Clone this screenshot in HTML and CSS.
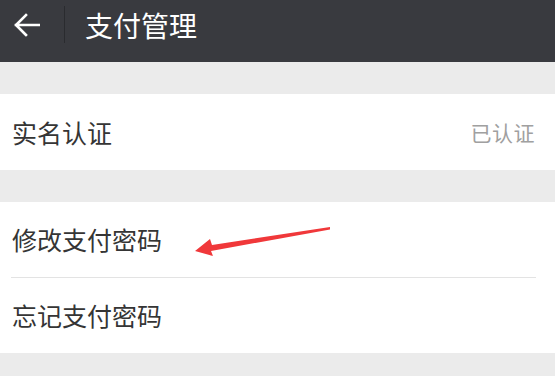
FILE: index.html
```html
<!DOCTYPE html>
<html lang="zh">
<head>
<meta charset="utf-8">
<link rel="stylesheet" href="styles.css">
</head>
<body>
<div class="page">
  <header class="topbar">
    <div class="back">
      <svg width="26" height="24" viewBox="0 0 26 24"><path d="M12 2 L2 12 L12 22 M2 12 H25" fill="none" stroke="#fff" stroke-width="2.6" stroke-linecap="square"/></svg>
    </div>
    <div class="vline"></div>
    <div class="title">支付管理</div>
  </header>
  <section class="group g1">
    <div class="row"><span class="label">实名认证</span><span class="value">已认证</span></div>
  </section>
  <section class="group g2">
    <div class="row"><span class="label">修改支付密码</span></div>
    <div class="sep"></div>
    <div class="row"><span class="label">忘记支付密码</span></div>
  </section>
  <svg class="pointer" width="555" height="376" viewBox="0 0 555 376">
    <polygon points="330,227 330,229.5 211,251 213,256 195,251 210,239 212,245" fill="#f0383a"/>
  </svg>
</div>
</body>
</html>
```

FILE: styles.css
```css
html, body {
  margin: 0;
  padding: 0;
  background: #ebebeb;
}
.page {
  position: relative;
  width: 555px;
  height: 376px;
  overflow: hidden;
  font-family: "Noto Sans CJK SC", "Noto Sans", sans-serif;
}
.topbar {
  height: 62px;
  background: #393a3f;
  display: flex;
  align-items: center;
}
.back {
  width: 64px;
  display: flex;
  justify-content: center;
  padding-right: 10px;
  box-sizing: border-box;
  margin-top: -12px;
}
.back svg { display: block; }
.vline {
  width: 1px;
  height: 37px;
  background: #2a2b2f;
  align-self: flex-start;
  margin-top: 6px;
}
.title {
  color: #fff;
  font-size: 28px;
  margin-left: 20px;
  margin-top: -13px;
}
.group {
  background: #fff;
}
.g1 { margin-top: 32px; }
.g2 { margin-top: 32px; }
.row {
  height: 75px;
  display: flex;
  align-items: center;
  justify-content: space-between;
  padding: 0 20px 0 12px;
}
.g1 .row { height: 76px; }
.label {
  font-size: 25px;
  color: #353535;
  margin-top: -1px;
}
.value {
  font-size: 21px;
  color: #a0a0a0;
  letter-spacing: 0.5px;
}
.sep {
  height: 1px;
  background: #e3e3e3;
  margin: 0 19px 0 11px;
}
.pointer {
  position: absolute;
  left: 0;
  top: 0;
}
```
